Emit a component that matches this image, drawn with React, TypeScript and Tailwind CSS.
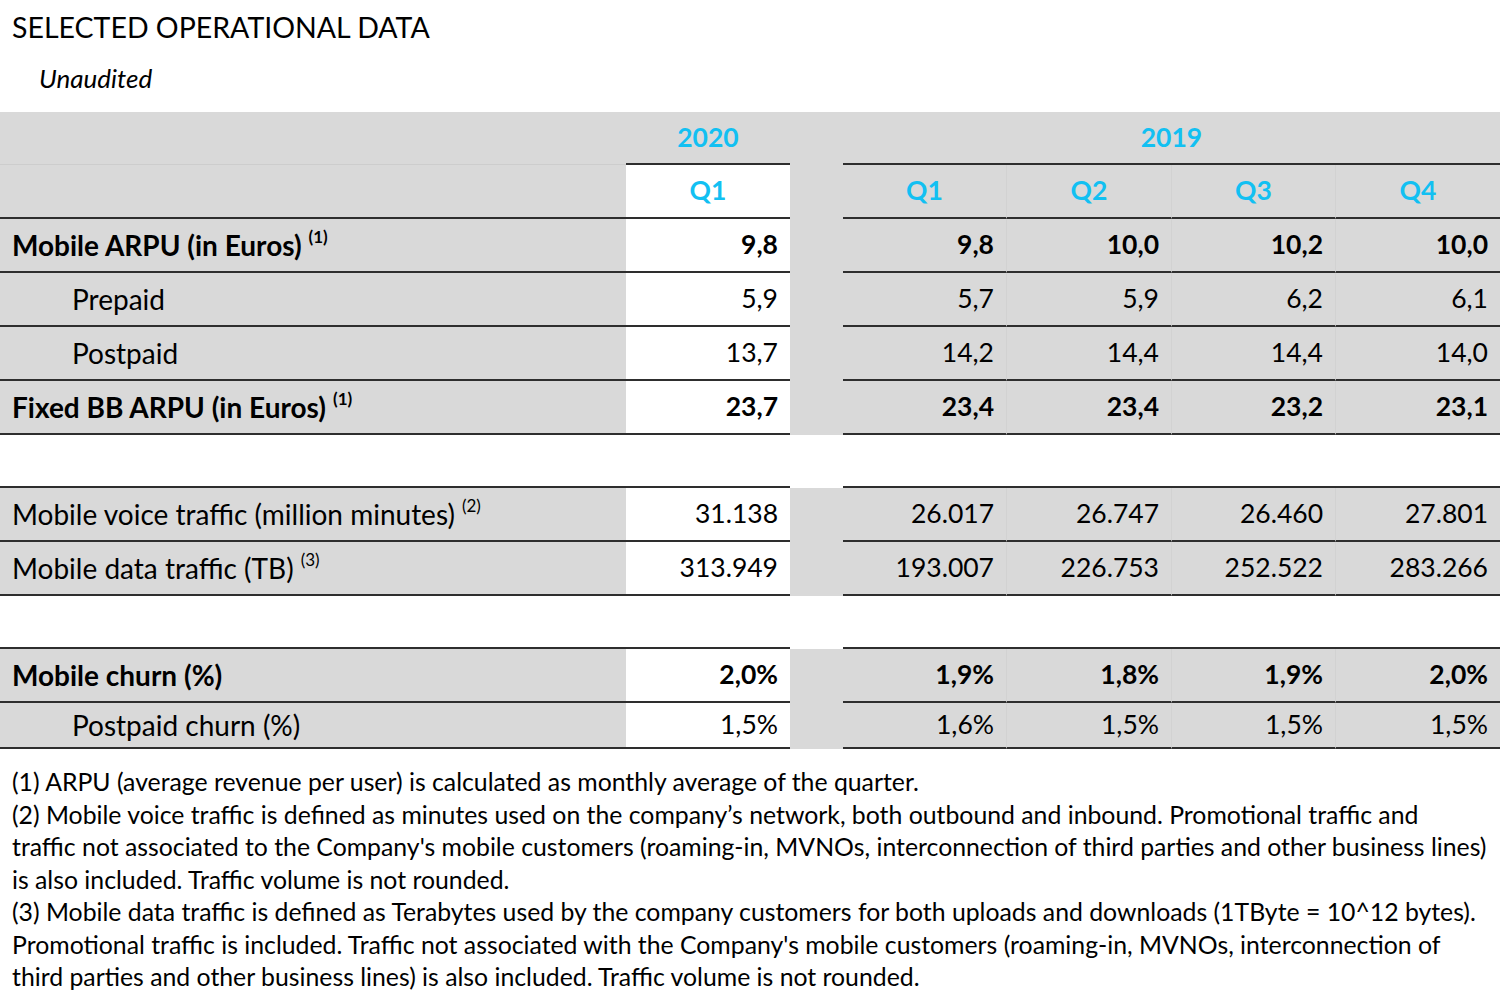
import React from 'react'

type Row = {
  label: string
  note?: string
  bold?: boolean
  indent?: boolean
  values: string[]
  h?: string
}

const arpuRows: Row[] = [
  { label: 'Mobile ARPU (in Euros)', note: '(1)', bold: true, values: ['9,8', '9,8', '10,0', '10,2', '10,0'] },
  { label: 'Prepaid', indent: true, values: ['5,9', '5,7', '5,9', '6,2', '6,1'] },
  { label: 'Postpaid', indent: true, values: ['13,7', '14,2', '14,4', '14,4', '14,0'] },
  { label: 'Fixed BB ARPU (in Euros)', note: '(1)', bold: true, values: ['23,7', '23,4', '23,4', '23,2', '23,1'] },
]

const trafficRows: Row[] = [
  { label: 'Mobile voice traffic (million minutes)', note: '(2)', values: ['31.138', '26.017', '26.747', '26.460', '27.801'] },
  { label: 'Mobile data traffic (TB)', note: '(3)', values: ['313.949', '193.007', '226.753', '252.522', '283.266'] },
]

const churnRows: Row[] = [
  { label: 'Mobile churn (%)', bold: true, values: ['2,0%', '1,9%', '1,8%', '1,9%', '2,0%'] },
  { label: 'Postpaid churn (%)', indent: true, values: ['1,5%', '1,6%', '1,5%', '1,5%', '1,5%'], h: 'h-[46px]' },
]

const cols = 'grid grid-cols-[626px_164px_53px_164px_165px_164px_164px]'
const line = 'border-b-2 border-[#2e2e2e]'

function DataRow({ row }: { row: Row }) {
  const h = row.h || 'h-[54px]'
  const weight = row.bold ? 'font-bold' : 'font-normal'
  return (
    <div className={cols}>
      <div className={`${h} ${line} bg-[#d9d9d9] flex items-center text-[28px] ${row.indent ? 'pl-[72px]' : 'pl-3'} ${weight}`}>
        <span>{row.label}</span>
        {row.note && <span className="ml-[7px] text-[17px] -translate-y-[8px]">{row.note}</span>}
      </div>
      <div className={`${h} ${line} bg-white flex items-center justify-end pr-3 ${weight}`}>{row.values[0]}</div>
      <div className={`${h} bg-[#d9d9d9]`} />
      {row.values.slice(1).map((v, i) => (
        <div
          key={i}
          className={`${h} ${line} bg-[#d9d9d9] flex items-center justify-end pr-3 ${weight} ${i < 3 ? 'border-r border-r-[#d2d2d2]' : ''}`}
        >
          {v}
        </div>
      ))}
    </div>
  )
}

function Block({ rows, gap }: { rows: Row[]; gap?: string }) {
  return (
    <div className={gap || ''}>
      {gap && (
        <div className={cols}>
          <div className="border-t-2 border-[#2e2e2e]" />
          <div className="border-t-2 border-[#2e2e2e]" />
          <div />
          <div className="col-span-4 border-t-2 border-[#2e2e2e]" />
        </div>
      )}
      {rows.map((r) => (
        <DataRow key={r.label} row={r} />
      ))}
    </div>
  )
}

export default function App() {
  return (
    <div className="w-[1500px] h-[1005px] bg-white text-black font-['Lato','Open_Sans',sans-serif] text-[26.5px] overflow-hidden">
      <div className="pl-3 pt-[9px] h-[52px] text-[28.5px] leading-[36px]">SELECTED OPERATIONAL DATA</div>
      <div className="pl-[39px] h-[60px] pt-[10px] italic text-[26px] leading-[32px]">Unaudited</div>

      {/* header */}
      <div className={cols}>
        <div className="h-[53px] bg-[#d9d9d9] border-b border-[#cdcdcd]" />
        <div className="h-[53px] bg-[#d9d9d9] border-b-2 border-[#2e2e2e] flex items-center justify-center font-bold text-[#12c0f2]">2020</div>
        <div className="h-[53px] bg-[#d9d9d9]" />
        <div className="col-span-4 h-[53px] bg-[#d9d9d9] border-b-2 border-[#2e2e2e] flex items-center justify-center font-bold text-[#12c0f2]">2019</div>
      </div>
      <div className={cols}>
        <div className={`h-[54px] bg-[#d9d9d9] ${line}`} />
        <div className={`h-[54px] bg-white ${line} flex items-center justify-center font-bold text-[#12c0f2]`}>Q1</div>
        <div className="h-[54px] bg-[#d9d9d9]" />
        {['Q1', 'Q2', 'Q3', 'Q4'].map((q, i) => (
          <div
            key={q}
            className={`h-[54px] bg-[#d9d9d9] ${line} flex items-center justify-center font-bold text-[#12c0f2] ${i < 3 ? 'border-r border-r-[#d2d2d2]' : ''}`}
          >
            {q}
          </div>
        ))}
      </div>

      <Block rows={arpuRows} />
      <Block rows={trafficRows} gap="mt-[51px]" />
      <Block rows={churnRows} gap="mt-[51px]" />

      <div className="pl-3 pt-[17px] text-[24.8px] leading-[32.5px] whitespace-nowrap">
        <div>(1) ARPU (average revenue per user) is calculated as monthly average of the quarter.</div>
        <div>(2) Mobile voice traffic is defined as minutes used on the company’s network, both outbound and inbound. Promotional traffic and</div>
        <div>traffic not associated to the Company's mobile customers (roaming-in, MVNOs, interconnection of third parties and other business lines)</div>
        <div>is also included. Traffic volume is not rounded.</div>
        <div>(3) Mobile data traffic is defined as Terabytes used by the company customers for both uploads and downloads (1TByte = 10^12 bytes).</div>
        <div>Promotional traffic is included. Traffic not associated with the Company's mobile customers (roaming-in, MVNOs, interconnection of</div>
        <div>third parties and other business lines) is also included. Traffic volume is not rounded.</div>
      </div>
    </div>
  )
}
